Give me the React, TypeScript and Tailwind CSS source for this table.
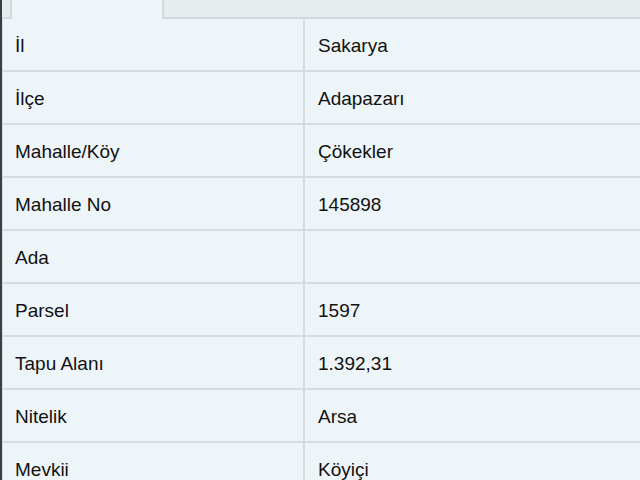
const rows: [string, string][] = [
  ["İl", "Sakarya"],
  ["İlçe", "Adapazarı"],
  ["Mahalle/Köy", "Çökekler"],
  ["Mahalle No", "145898"],
  ["Ada", ""],
  ["Parsel", "1597"],
  ["Tapu Alanı", "1.392,31"],
  ["Nitelik", "Arsa"],
  ["Mevkii", "Köyiçi"],
]

export default function App() {
  return (
    <div
      className="flex h-[480px] w-[640px] overflow-hidden bg-[#eef5f8] text-[19px] text-[#111]"
      style={{ fontFamily: '"Liberation Sans", Arial, sans-serif' }}
    >
      <div className="w-[2px] shrink-0 bg-[#3c3f42]" />
      <div className="flex min-w-0 flex-1 flex-col">
        <div className="flex h-[19px] shrink-0">
          <div className="w-[8px] border-b-2 border-[#d3dadf] bg-[#e7ecef]" />
          <div className="w-[154px] border-x-2 border-[#d3dadf] bg-[#eef5f8]" />
          <div className="flex-1 border-b-2 border-[#d3dadf] bg-[#e7ecef]" />
        </div>
        <div className="flex flex-col gap-[2px] bg-[#d6dde1] pl-[1px]">
          {rows.map(([label, value]) => (
            <div key={label} className="flex h-[51px] shrink-0 gap-[2px]">
              <div className="flex w-[300px] items-center bg-[#eef5f8] pl-[12px] pt-[4px]">
                {label}
              </div>
              <div className="flex flex-1 items-center bg-[#eef5f8] pl-[13px] pt-[4px]">
                {value}
              </div>
            </div>
          ))}
        </div>
      </div>
    </div>
  )
}
